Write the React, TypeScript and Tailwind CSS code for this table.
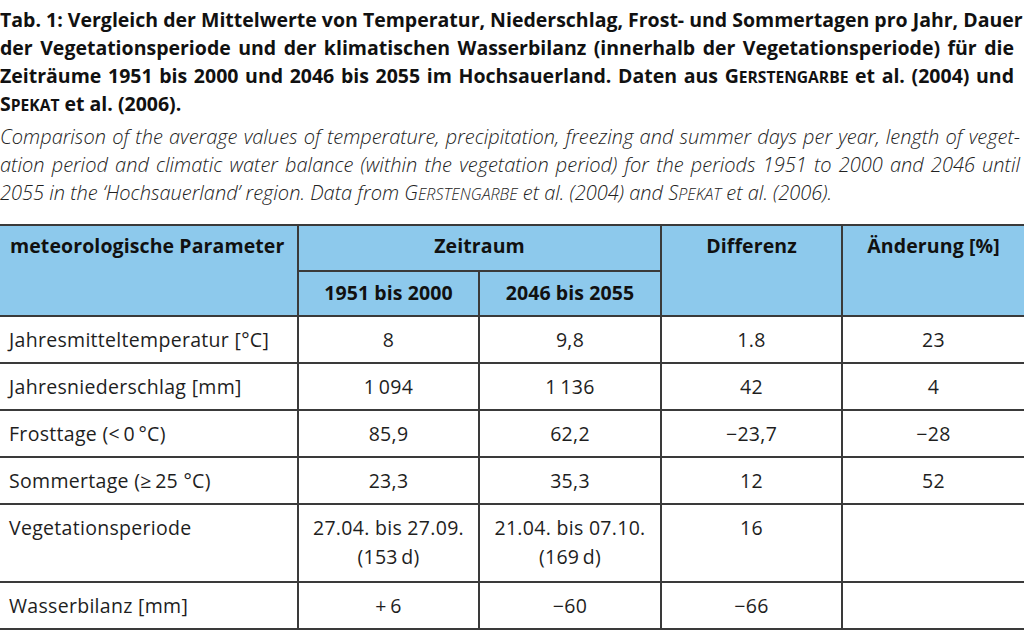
import React from "react";

const thin = "\u2009";

function Caps({ first, rest }: { first: string; rest: string }) {
  return (
    <span>
      {first}
      <span className="text-[0.8em] leading-none">{rest}</span>
    </span>
  );
}

type Row = { label: string; a: React.ReactNode; b: React.ReactNode; diff: string; pct: string; tall?: boolean };

const rows: Row[] = [
  { label: "Jahresmitteltemperatur [°C]", a: "8", b: "9,8", diff: "1.8", pct: "23" },
  { label: "Jahresniederschlag [mm]", a: `1${thin}094`, b: `1${thin}136`, diff: "42", pct: "4" },
  { label: `Frosttage (<${thin}0${thin}°C)`, a: "85,9", b: "62,2", diff: "\u221223,7", pct: "\u221228" },
  { label: `Sommertage (≥${thin}25 °C)`, a: "23,3", b: "35,3", diff: "12", pct: "52" },
  {
    label: "Vegetationsperiode",
    a: (
      <>
        27.04. bis 27.09.
        <br />
        {`(153${thin}d)`}
      </>
    ),
    b: (
      <>
        21.04. bis 07.10.
        <br />
        {`(169${thin}d)`}
      </>
    ),
    diff: "16",
    pct: "",
    tall: true,
  },
  { label: "Wasserbilanz [mm]", a: `+${thin}6`, b: "\u221260", diff: "\u221266", pct: "" },
];

const line = "[text-align-last:justify] whitespace-nowrap";

export default function App() {
  return (
    <div className="h-[639px] w-[1024px] overflow-hidden bg-white font-['Open_Sans',sans-serif] text-[#1a1a1a]">
      <div className="pt-[6px] pr-[10px] text-[19.5px] font-bold leading-[28px] text-[#111]">
        <p className={line}>
          Tab. 1: Vergleich der Mittelwerte von Temperatur, Niederschlag, Frost- und Sommertagen pro Jahr, Dauer
        </p>
        <p className={line}>
          der Vegetationsperiode und der klimatischen Wasserbilanz (innerhalb der Vegetationsperiode) für die
        </p>
        <p className={line}>
          Zeiträume 1951 bis 2000 und 2046 bis 2055 im Hochsauerland. Daten aus <Caps first="G" rest="ERSTENGARBE" /> et al. (2004) und
        </p>
        <p>
          <Caps first="S" rest="PEKAT" /> et al. (2006).
        </p>
      </div>
      <div className="mt-[5px] pr-[4px] text-[20px] font-light italic leading-[28px] text-[#222]">
        <p className={line}>
          Comparison of the average values of temperature, precipitation, freezing and summer days per year, length of veget-
        </p>
        <p className={line}>
          ation period and climatic water balance (within the vegetation period) for the periods 1951 to 2000 and 2046 until
        </p>
        <p>
          2055 in the ‘Hochsauerland’ region. Data from <Caps first="G" rest="ERSTENGARBE" /> et al. (2004) and{" "}
          <Caps first="S" rest="PEKAT" /> et al. (2006).
        </p>
      </div>

      <table className="mt-[17px] w-full table-fixed border-collapse text-[19.5px] leading-[29px] tracking-[0.3px]">
        <colgroup>
          <col className="w-[298px]" />
          <col className="w-[181px]" />
          <col className="w-[182px]" />
          <col className="w-[181px]" />
          <col className="w-[182px]" />
        </colgroup>
        <thead className="bg-[#8dc9ec] font-bold tracking-[0.1px] text-[#111]">
          <tr className="h-[46px]">
            <th rowSpan={2} className="border-y-2 border-r-2 border-[#3a3a3a] px-[10px] pt-[5px] text-left align-top">
              meteorologische Parameter
            </th>
            <th colSpan={2} className="border-2 border-[#3a3a3a] pt-[5px] text-center align-top">
              Zeitraum
            </th>
            <th rowSpan={2} className="border-2 border-[#3a3a3a] pt-[5px] text-center align-top">
              Differenz
            </th>
            <th rowSpan={2} className="border-y-2 border-l-2 border-[#3a3a3a] pt-[5px] text-center align-top">
              Änderung [%]
            </th>
          </tr>
          <tr className="h-[45px]">
            <th className="border-2 border-[#3a3a3a] pt-[6px] text-center align-top">1951 bis 2000</th>
            <th className="border-2 border-[#3a3a3a] pt-[6px] text-center align-top">2046 bis 2055</th>
          </tr>
        </thead>
        <tbody className="text-[#1e1e1e]">
          {rows.map((r) => (
            <tr key={r.label} className={r.tall ? "h-[78px]" : "h-[47px]"}>
              <td className="border-y-2 border-r-2 border-[#3a3a3a] px-[9px] pt-[8px] align-top">{r.label}</td>
              <td className="border-2 border-[#3a3a3a] pt-[8px] text-center align-top">{r.a}</td>
              <td className="border-2 border-[#3a3a3a] pt-[8px] text-center align-top">{r.b}</td>
              <td className="border-2 border-[#3a3a3a] pt-[8px] text-center align-top">{r.diff}</td>
              <td className="border-y-2 border-l-2 border-[#3a3a3a] pt-[8px] text-center align-top">{r.pct}</td>
            </tr>
          ))}
        </tbody>
      </table>
    </div>
  );
}
